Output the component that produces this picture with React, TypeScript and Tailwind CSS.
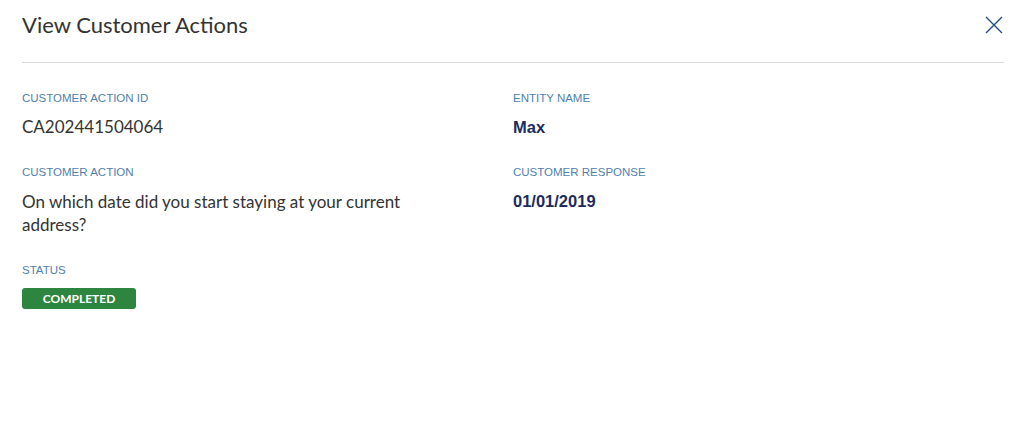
import React from 'react';

const body = "font-['Lato','Liberation_Sans',sans-serif]";
const label = "font-['Liberation_Sans',Arial,sans-serif] text-[11.5px] leading-[14px] text-[#4f7fae] uppercase";
const strong = "font-['Liberation_Sans',Arial,sans-serif] font-bold text-[16.5px] text-[#1d2c5e]";

const Field: React.FC<{ title: string; children: React.ReactNode }> = ({ title, children }) => (
  <div>
    <p className={label}>{title}</p>
    <div className="mt-[11px]">{children}</div>
  </div>
);

export default function App() {
  return (
    <div className="w-[1014px] h-[436px] bg-white pl-[22px] pr-[10px]">
      {/* Header */}
      <div className="flex items-center justify-between h-[63px] border-b border-[#d9d9d9]">
        <h1 className={`${body} text-[22px] leading-[28px] text-[#333333] -mt-[12px]`}>View Customer Actions</h1>
        <button className="-mt-[12px] mr-[1px] text-[#1f4e8c]" aria-label="Close">
          <svg width="18" height="18" viewBox="0 0 18 18" fill="none" stroke="currentColor" strokeWidth="1.4">
            <path d="M1 1L17 17M17 1L1 17" />
          </svg>
        </button>
      </div>

      {/* Details */}
      <div className="grid grid-cols-2 pt-[28px]">
        <div className="flex flex-col gap-[27px]">
          <Field title="Customer Action Id">
            <p className={`${body} text-[17px] leading-[22px] text-[#333333]`}>CA202441504064</p>
          </Field>
          <Field title="Customer Action">
            <p className={`${body} text-[17px] leading-[23px] text-[#333333] max-w-[420px]`}>
              On which date did you start staying at your current address?
            </p>
          </Field>
          <div>
            <p className={label}>Status</p>
            <span className={`${body} mt-[11px] inline-flex items-center justify-center w-[114px] h-[21px] rounded-[3px] bg-[#2e8540] text-white text-[12px] font-bold`}>
              COMPLETED
            </span>
          </div>
        </div>
        <div className="flex flex-col gap-[27px]">
          <Field title="Entity Name">
            <p className={`${strong} leading-[22px]`}>Max</p>
          </Field>
          <Field title="Customer Response">
            <p className={`${strong} leading-[23px]`}>01/01/2019</p>
          </Field>
        </div>
      </div>
    </div>
  );
}
